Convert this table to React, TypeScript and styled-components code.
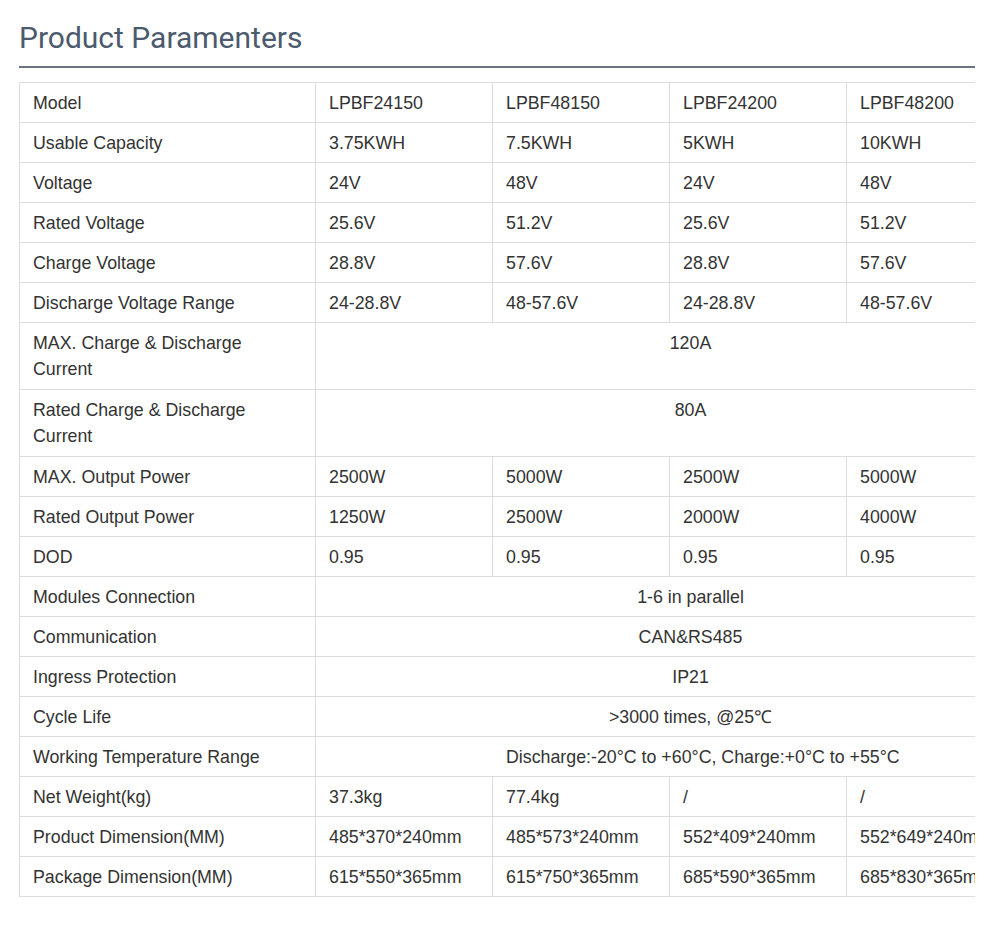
import React from "react";
import styled, { createGlobalStyle } from "styled-components";

const Global = createGlobalStyle`
  html, body { margin: 0; padding: 0; background: #fff; }
  body { font-family: "Liberation Sans", Arial, sans-serif; }
`;

const Page = styled.div`
  padding: 18px 25px 30px 19px;
`;

const Title = styled.h2`
  margin: 0;
  font-family: Roboto, "Liberation Sans", sans-serif;
  font-weight: 400;
  font-size: 30px;
  line-height: 40px;
  color: #4c5a6e;
  padding-bottom: 8px;
  border-bottom: 2px solid #6b7582;
`;

const Scroller = styled.div`
  margin-top: 14px;
  overflow: hidden;
`;

const Table = styled.table`
  border-collapse: collapse;
  table-layout: fixed;
  width: 1046px;
  font-family: "Liberation Sans", Arial, sans-serif;
  font-size: 17.8px;
  line-height: 26px;
  color: #333;
`;

const Col = styled.col<{ $w: number }>`
  width: ${(p) => p.$w}px;
`;

const Tr = styled.tr<{ $tall?: boolean }>`
  & > td {
    padding-bottom: ${(p) => (p.$tall ? 7 : 6)}px;
  }
`;

const Cell = styled.td<{ $center?: boolean }>`
  border: 1px solid #dddddd;
  padding: 7px 13px 6px;
  text-align: ${(p) => (p.$center ? "center" : "left")};
  vertical-align: top;
  white-space: ${(p) => (p.$center ? "nowrap" : "normal")};
  overflow: hidden;
`;

const LabelCell = styled(Cell)`
  white-space: normal;
`;

type Row = [string, string[] | string];

const widths = [296, 177, 177, 177, 219];

const rows: Row[] = [
  ["Model", ["LPBF24150", "LPBF48150", "LPBF24200", "LPBF48200"]],
  ["Usable Capacity", ["3.75KWH", "7.5KWH", "5KWH", "10KWH"]],
  ["Voltage", ["24V", "48V", "24V", "48V"]],
  ["Rated Voltage", ["25.6V", "51.2V", "25.6V", "51.2V"]],
  ["Charge Voltage", ["28.8V", "57.6V", "28.8V", "57.6V"]],
  ["Discharge Voltage Range", ["24-28.8V", "48-57.6V", "24-28.8V", "48-57.6V"]],
  ["MAX. Charge & Discharge Current", "120A"],
  ["Rated Charge & Discharge Current", "80A"],
  ["MAX. Output Power", ["2500W", "5000W", "2500W", "5000W"]],
  ["Rated Output Power", ["1250W", "2500W", "2000W", "4000W"]],
  ["DOD", ["0.95", "0.95", "0.95", "0.95"]],
  ["Modules Connection", "1-6 in parallel"],
  ["Communication", "CAN&RS485"],
  ["Ingress Protection", "IP21"],
  ["Cycle Life", ">3000 times, @25℃"],
  ["Working Temperature Range", "\u00a0\u00a0\u00a0\u00a0\u00a0Discharge:-20°C to +60°C, Charge:+0°C to +55°C"],
  ["Net Weight(kg)", ["37.3kg", "77.4kg", "/", "/"]],
  ["Product Dimension(MM)", ["485*370*240mm", "485*573*240mm", "552*409*240mm", "552*649*240mm"]],
  ["Package Dimension(MM)", ["615*550*365mm", "615*750*365mm", "685*590*365mm", "685*830*365mm"]],
];

export default function App() {
  return (
    <>
      <Global />
      <Page>
        <Title>Product Paramenters</Title>
        <Scroller>
          <Table>
            <colgroup>
              {widths.map((w, i) => (
                <Col key={i} $w={w} />
              ))}
            </colgroup>
            <tbody>
              {rows.map(([label, val]) => (
                <Tr key={label} $tall={label.length > 26}>
                  <LabelCell>{label}</LabelCell>
                  {Array.isArray(val) ? (
                    val.map((v, i) => <Cell key={i}>{v}</Cell>)
                  ) : (
                    <Cell $center colSpan={4}>
                      {val}
                    </Cell>
                  )}
                </Tr>
              ))}
            </tbody>
          </Table>
        </Scroller>
      </Page>
    </>
  );
}
